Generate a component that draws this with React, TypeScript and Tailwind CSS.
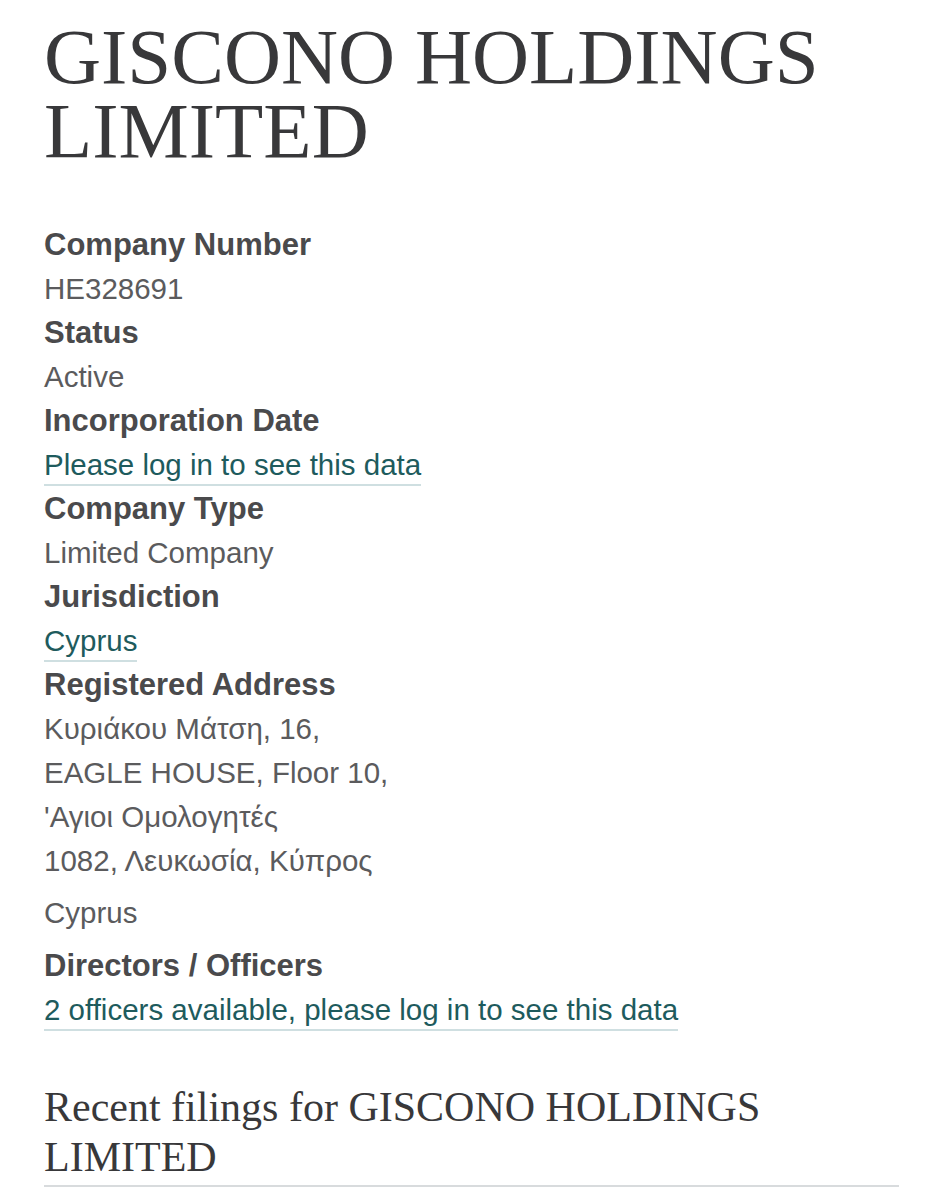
const serif = { fontFamily: '"Liberation Serif", "Times New Roman", serif' };

function Label({ children }: { children: React.ReactNode }) {
  return <dt className="text-[31px] font-bold text-[#4a4a4c]">{children}</dt>;
}

function Value({ children }: { children: React.ReactNode }) {
  return <dd className="text-[#5b5b5d]">{children}</dd>;
}

function LinkValue({ children }: { children: React.ReactNode }) {
  return (
    <dd>
      <a
        href="#"
        className="border-b-2 border-[#cfdfe1] pb-[3px] text-[#1e5b5d]"
      >
        {children}
      </a>
    </dd>
  );
}

export default function App() {
  return (
    <div
      className="min-h-[1200px] bg-white px-[44px] pt-[20px]"
      style={{ fontFamily: '"Liberation Sans", Arial, sans-serif' }}
    >
      <h1
        className="text-[79px] leading-[74px] text-[#38383a]"
        style={serif}
      >
        GISCONO HOLDINGS LIMITED
      </h1>

      <dl className="mt-[55px] text-[29.5px] leading-[44px]">
        <Label>Company Number</Label>
        <Value>HE328691</Value>
        <Label>Status</Label>
        <Value>Active</Value>
        <Label>Incorporation Date</Label>
        <LinkValue>Please log in to see this data</LinkValue>
        <Label>Company Type</Label>
        <Value>Limited Company</Value>
        <Label>Jurisdiction</Label>
        <LinkValue>Cyprus</LinkValue>
        <Label>Registered Address</Label>
        <dd className="text-[#5b5b5d]">
          <div>Κυριάκου Μάτση, 16,</div>
          <div>EAGLE HOUSE, Floor 10,</div>
          <div>'Αγιοι Ομολογητές</div>
          <div>1082, Λευκωσία, Κύπρος</div>
          <div className="mt-[8px] mb-[9px]">Cyprus</div>
        </dd>
        <Label>Directors / Officers</Label>
        <LinkValue>2 officers available, please log in to see this data</LinkValue>
      </dl>

      <h2
        className="mt-[50px] border-b-2 border-[#d8dbdd] pb-[3px] text-[42px] leading-[50px] text-[#38383a]"
        style={serif}
      >
        Recent filings for GISCONO HOLDINGS LIMITED
      </h2>
    </div>
  );
}
